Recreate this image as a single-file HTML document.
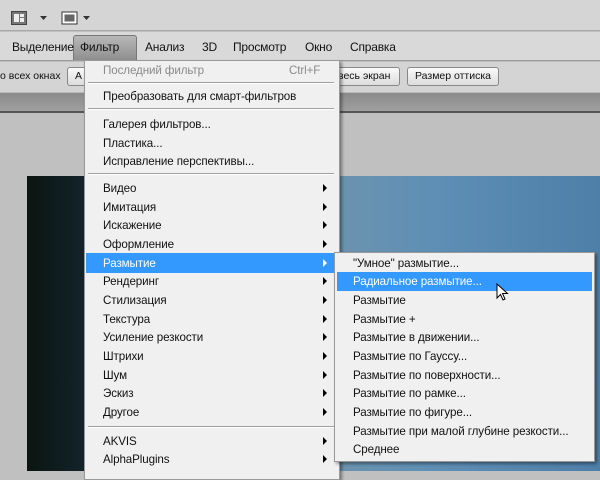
<!DOCTYPE html>
<html><head><meta charset="utf-8"><style>
*{margin:0;padding:0;box-sizing:border-box}
body{width:600px;height:471px;overflow:hidden;position:relative;background:#c0c0c0;font-family:"Liberation Sans","DejaVu Sans",sans-serif;font-size:12px;color:#111}
.a{position:absolute}
.top{left:0;top:0;width:600px;height:31px;background:#d5d5d5;border-bottom:1px solid #a8a8a8}
.mb{left:0;top:32px;width:600px;height:29px;background:#d9d9d9;border-bottom:1px solid #9a9a9a}
.ob{left:0;top:62px;width:600px;height:31px;background:#d4d4d4;border-bottom:1px solid #bbb}
.gb{left:0;top:93px;width:600px;height:20px;background:linear-gradient(#8a8a8a,#a0a0a0);border-bottom:2px solid #555}
.mi{top:40px;font-size:12px;letter-spacing:-0.2px}
.btn{top:67px;height:19px;border:1px solid #888;border-radius:3px;background:linear-gradient(#fafafa,#dcdcdc);font-size:10.5px;padding:2px 7px}
.img{left:27px;top:176px;width:573px;height:295px;background:linear-gradient(90deg,#0b1510 0%,#12232a 10%,#3e6880 30%,#6f94ad 50%,#5f8fb5 70%,#4d7fa8 100%)}
.menu{left:84px;top:60px;width:256px;height:420px;background:#f0f0f0;border:1px solid #999;box-shadow:2px 2px 3px rgba(0,0,0,.4)}
.it{position:absolute;left:18px;font-size:11.6px;letter-spacing:-0.1px}
.sep{position:absolute;left:3px;width:246px;height:2px;border-top:1px solid #a0a0a0;border-bottom:1px solid #fff}
.ar{position:absolute;left:238px;width:0;height:0;border-top:4px solid transparent;border-bottom:4px solid transparent;border-left:4px solid #000}
.sub{left:334px;top:252px;width:261px;height:210px;background:#f0f0f0;border:1px solid #999;box-shadow:2px 2px 3px rgba(0,0,0,.4)}
.si{position:absolute;left:18px;font-size:11.6px;letter-spacing:-0.1px}
</style></head><body>
<div class="a top"></div>
<svg class="a" style="left:10px;top:10px" width="85" height="16"><rect x="1.5" y="1.5" width="15" height="13" fill="#777" stroke="#444"/><rect x="4" y="4" width="5" height="8" fill="#eee"/><rect x="10" y="4" width="4" height="3" fill="#eee"/><rect x="10" y="8" width="4" height="4" fill="#eee"/><path d="M30 6h7l-3.5 4z" fill="#333"/><rect x="52" y="2" width="15" height="12" fill="#fff" stroke="#333"/><rect x="54.5" y="4.5" width="10" height="7" fill="#666"/><path d="M73 6h7l-3.5 4z" fill="#333"/></svg>
<div class="a mb"></div>
<div class="a" style="left:73px;top:35px;width:64px;height:25px;background:linear-gradient(#b8b8b8,#8f8f8f);border:1px solid #777;border-bottom:none;border-radius:3px 3px 0 0"></div>
<span class="a mi" style="left:12px">Выделение</span>
<span class="a mi" style="left:80px">Фильтр</span>
<span class="a mi" style="left:145px">Анализ</span>
<span class="a mi" style="left:202px">3D</span>
<span class="a mi" style="left:233px">Просмотр</span>
<span class="a mi" style="left:305px">Окно</span>
<span class="a mi" style="left:350px">Справка</span>
<div class="a ob"></div>
<span class="a" style="left:0;top:70px;font-size:10.5px">о всех окнах</span>
<div class="a btn" style="left:67px;width:30px">А</div>
<div class="a btn" style="left:330px;width:70px">весь экран</div>
<div class="a btn" style="left:407px;width:92px">Размер оттиска</div>
<div class="a gb"></div>
<div class="a img"></div>
<div class="a menu">
<span class="it" style="top:3px;color:#8a8a8a">Последний фильтр</span><span class="it" style="left:204px;top:3px;color:#8a8a8a">Ctrl+F</span>
<div class="sep" style="top:21px"></div>
<span class="it" style="top:29px">Преобразовать для смарт-фильтров</span>
<div class="sep" style="top:47px"></div>
<span class="it" style="top:57px">Галерея фильтров...</span>
<span class="it" style="top:76px">Пластика...</span>
<span class="it" style="top:94px">Исправление перспективы...</span>
<div class="sep" style="top:112px"></div>
<div style="position:absolute;left:1px;top:192px;width:248px;height:20px;background:#3399ff"></div>
<span class="it" style="top:121px">Видео</span><i class="ar" style="top:123px"></i>
<span class="it" style="top:140px">Имитация</span><i class="ar" style="top:142px"></i>
<span class="it" style="top:158px">Искажение</span><i class="ar" style="top:160px"></i>
<span class="it" style="top:177px">Оформление</span><i class="ar" style="top:179px"></i>
<span class="it" style="top:196px;color:#fff">Размытие</span><i class="ar" style="top:198px;border-left-color:#fff"></i>
<span class="it" style="top:214px">Рендеринг</span><i class="ar" style="top:216px"></i>
<span class="it" style="top:233px">Стилизация</span><i class="ar" style="top:235px"></i>
<span class="it" style="top:252px">Текстура</span><i class="ar" style="top:254px"></i>
<span class="it" style="top:270px">Усиление резкости</span><i class="ar" style="top:272px"></i>
<span class="it" style="top:289px">Штрихи</span><i class="ar" style="top:291px"></i>
<span class="it" style="top:308px">Шум</span><i class="ar" style="top:310px"></i>
<span class="it" style="top:326px">Эскиз</span><i class="ar" style="top:328px"></i>
<span class="it" style="top:345px">Другое</span><i class="ar" style="top:347px"></i>
<div class="sep" style="top:365px"></div>
<span class="it" style="top:374px">AKVIS</span><i class="ar" style="top:376px"></i>
<span class="it" style="top:392px">AlphaPlugins</span><i class="ar" style="top:394px"></i>
</div>
<div class="a sub">
<div style="position:absolute;left:2px;top:19px;width:255px;height:19px;background:#3399ff"></div>
<span class="si" style="top:4px">"Умное" размытие...</span>
<span class="si" style="top:22px;color:#fff">Радиальное размытие...</span>
<span class="si" style="top:41px">Размытие</span>
<span class="si" style="top:60px">Размытие +</span>
<span class="si" style="top:78px">Размытие в движении...</span>
<span class="si" style="top:97px">Размытие по Гауссу...</span>
<span class="si" style="top:116px">Размытие по поверхности...</span>
<span class="si" style="top:134px">Размытие по рамке...</span>
<span class="si" style="top:153px">Размытие по фигуре...</span>
<span class="si" style="top:172px">Размытие при малой глубине резкости...</span>
<span class="si" style="top:190px">Среднее</span>
</div>
<svg class="a" style="left:496px;top:283px" width="14" height="20"><path d="M1 1v14l3.5-3.5 2.5 5.5 2-1-2.5-5.5h5z" fill="#fff" stroke="#000" stroke-width="1"/></svg>
</body></html>
